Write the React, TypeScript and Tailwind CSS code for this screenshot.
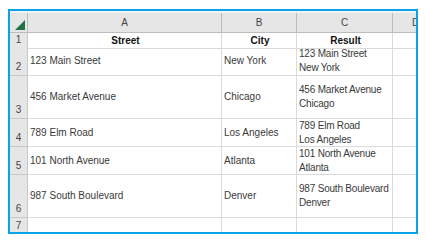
import React from 'react'

const rows = [
  { n: '2', h: 'h-[29px]', street: '123 Main Street', city: 'New York' },
  { n: '3', h: 'h-[43px]', street: '456 Market Avenue', city: 'Chicago' },
  { n: '4', h: 'h-[28px]', street: '789 Elm Road', city: 'Los Angeles' },
  { n: '5', h: 'h-[28px]', street: '101 North Avenue', city: 'Atlanta' },
  { n: '6', h: 'h-[43px]', street: '987 South Boulevard', city: 'Denver' },
]

const cell =
  'border-r border-b border-[#dadada] flex items-center pl-[2px] text-[#3a3a3a] whitespace-nowrap overflow-hidden'
const rowHead =
  'border-r border-b border-[#c8c8c8] bg-[#e6e6e6] flex items-end justify-center pb-[1px] text-[#444]'
const colHead =
  'border-r border-b border-[#bdbdbd] bg-[#e6e6e6] flex items-end justify-center pb-[2px] text-[#444]'

const App = () => {
  return (
    <div
      className="w-[426px] h-[242px] bg-white pl-[8px] pt-[9px]"
      style={{ fontFamily: '"Liberation Sans", Arial, sans-serif' }}
    >
      <div className="w-[410px] h-[225px] border-2 border-[#0aa3e6] overflow-hidden text-[10px] leading-[14px]">
        {/* top strip */}
        <div className="h-[2px] bg-[#f4f4f4]" />

        {/* column header */}
        <div className="grid grid-cols-[18px_194px_75px_96px_60px] h-[20px]">
          <div className="border-r border-b border-[#bdbdbd] bg-[#e6e6e6] flex items-end justify-end pr-[2px] pb-[2px]">
            <svg width="10" height="10" viewBox="0 0 10 10">
              <polygon points="10,0 10,10 0,10" fill="#217346" />
            </svg>
          </div>
          <div className={colHead}>A</div>
          <div className={colHead}>B</div>
          <div className={colHead}>C</div>
          <div className={colHead + ' justify-start pl-[19px]'}>D</div>
        </div>

        {/* row 1 */}
        <div className="grid grid-cols-[18px_194px_75px_96px_60px] h-[14px]">
          <div className={rowHead}>1</div>
          <div className={cell + ' justify-center font-bold text-[#111]'}>Street</div>
          <div className={cell + ' justify-center font-bold text-[#111]'}>City</div>
          <div className={cell + ' justify-center font-bold text-[#111]'}>Result</div>
          <div className={cell} />
        </div>

        {rows.map((r) => (
          <div key={r.n} className={`grid grid-cols-[18px_194px_75px_96px_60px] ${r.h}`}>
            <div className={rowHead}>{r.n}</div>
            <div className={cell}>{r.street}</div>
            <div className={cell}>{r.city}</div>
            <div className={cell + ' flex-col items-start justify-center tracking-[-0.2px]'}>
              <span>{r.street}</span>
              <span>{r.city}</span>
            </div>
            <div className={cell} />
          </div>
        ))}

        {/* row 7 */}
        <div className="grid grid-cols-[18px_194px_75px_96px_60px] h-[20px]">
          <div className={rowHead + ' items-start pt-[1px]'}>7</div>
          <div className={cell} />
          <div className={cell} />
          <div className={cell} />
          <div className={cell} />
        </div>
      </div>
    </div>
  )
}

export default App
